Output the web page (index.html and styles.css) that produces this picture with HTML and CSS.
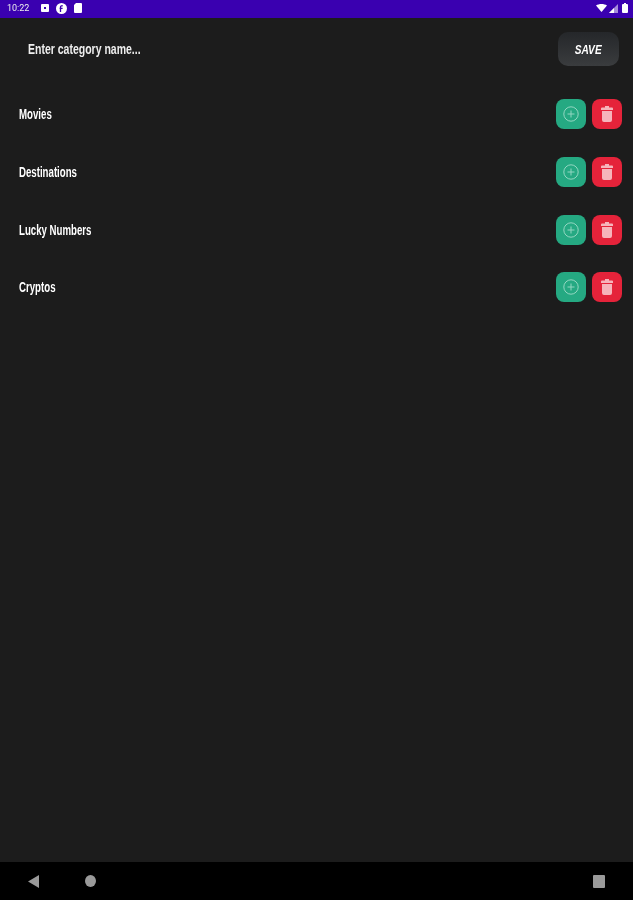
FILE: index.html
```html
<!DOCTYPE html>
<html lang="en">
<head>
  <meta charset="UTF-8">
  <title>Categories</title>
  <link rel="stylesheet" href="styles.css">
</head>
<body>
  <div class="status-bar">
    <span class="clock">10:22</span>
    <svg class="status-icon" width="8" height="8" viewBox="0 0 8 8"><rect width="8" height="8" rx="1" fill="#fff"/><rect x="3" y="3" width="2" height="2" fill="#3a00b0"/></svg>
    <svg class="status-icon" width="11" height="11" viewBox="0 0 11 11"><circle cx="5.500" cy="5.500" r="5.500" fill="#fff"/><path d="M4.500 9V4.200c0-1 .7-1.600 2.200-1.400M3.600 5.400h3" stroke="#3a00b0" stroke-width="1.300" fill="none"/></svg>
    <svg class="status-icon" width="8" height="10" viewBox="0 0 8 10"><path d="M2 0h5a1 1 0 0 1 1 1v8a1 1 0 0 1-1 1H1a1 1 0 0 1-1-1V2z" fill="#fff"/></svg>
    <div class="status-right">
      <svg width="11" height="8" viewBox="0 0 11 8"><path d="M0 1.500C3-.5 8-.5 11 1.500L5.500 8z" fill="#fff"/></svg>
      <svg width="9" height="9" viewBox="0 0 9 9"><path d="M9 0v9H0z" fill="#fff" opacity=".55"/><path d="M5 4v5H0z" fill="#fff"/></svg>
      <svg width="6" height="10" viewBox="0 0 6 10"><path d="M2 0h2v1h1a1 1 0 0 1 1 1v7a1 1 0 0 1-1 1H1a1 1 0 0 1-1-1V2a1 1 0 0 1 1-1h1z" fill="#fff"/></svg>
    </div>
  </div>

  <main class="content">
    <form class="add-form">
      <input class="name-input" type="text" placeholder="Enter category name...">
      <button class="save-btn" type="button"><span class="save-label">SAVE</span></button>
    </form>

    <ul class="category-list">
      <li class="category">
        <span class="category-name">Movies</span>
        <button class="icon-btn add" type="button"><svg width="16" height="16" viewBox="0 0 16 16"><circle cx="8" cy="8" r="7.200"/><path d="M8 4.500v7M4.500 8h7"/></svg></button>
        <button class="icon-btn del" type="button"><svg width="12" height="16" viewBox="0 0 12 16"><path d="M4 0h4v1.500h3a1 1 0 0 1 1 1V4H0V2.500a1 1 0 0 1 1-1h3zM1 5h10v9a2 2 0 0 1-2 2H3a2 2 0 0 1-2-2z"/></svg></button>
      </li>
      <li class="category">
        <span class="category-name">Destinations</span>
        <button class="icon-btn add" type="button"><svg width="16" height="16" viewBox="0 0 16 16"><circle cx="8" cy="8" r="7.200"/><path d="M8 4.500v7M4.500 8h7"/></svg></button>
        <button class="icon-btn del" type="button"><svg width="12" height="16" viewBox="0 0 12 16"><path d="M4 0h4v1.500h3a1 1 0 0 1 1 1V4H0V2.500a1 1 0 0 1 1-1h3zM1 5h10v9a2 2 0 0 1-2 2H3a2 2 0 0 1-2-2z"/></svg></button>
      </li>
      <li class="category">
        <span class="category-name">Lucky Numbers</span>
        <button class="icon-btn add" type="button"><svg width="16" height="16" viewBox="0 0 16 16"><circle cx="8" cy="8" r="7.200"/><path d="M8 4.500v7M4.500 8h7"/></svg></button>
        <button class="icon-btn del" type="button"><svg width="12" height="16" viewBox="0 0 12 16"><path d="M4 0h4v1.500h3a1 1 0 0 1 1 1V4H0V2.500a1 1 0 0 1 1-1h3zM1 5h10v9a2 2 0 0 1-2 2H3a2 2 0 0 1-2-2z"/></svg></button>
      </li>
      <li class="category">
        <span class="category-name">Cryptos</span>
        <button class="icon-btn add" type="button"><svg width="16" height="16" viewBox="0 0 16 16"><circle cx="8" cy="8" r="7.200"/><path d="M8 4.500v7M4.500 8h7"/></svg></button>
        <button class="icon-btn del" type="button"><svg width="12" height="16" viewBox="0 0 12 16"><path d="M4 0h4v1.500h3a1 1 0 0 1 1 1V4H0V2.500a1 1 0 0 1 1-1h3zM1 5h10v9a2 2 0 0 1-2 2H3a2 2 0 0 1-2-2z"/></svg></button>
      </li>
    </ul>
  </main>

  <nav class="nav-bar">
    <svg class="nav-back" width="11" height="13" viewBox="0 0 11 13"><path d="M11 0v13L0 6.500z"/></svg>
    <span class="nav-home"></span>
    <span class="nav-recent"></span>
  </nav>
</body>
</html>
```

FILE: styles.css
```css
* { box-sizing: border-box; }
html, body { height: 100%; }
body {
  margin: 0;
  display: flex;
  flex-direction: column;
  background: #1c1c1c;
  color: #fff;
  font-family: "Liberation Sans", sans-serif;
}
svg, .clock, .name-input, .save-label, .category-name, .nav-home, .nav-recent {
  filter: blur(0.45px);
}
.status-bar {
  height: 18px;
  display: flex;
  align-items: center;
  gap: 7px;
  padding: 0 5px 2px 7px;
  background: #3a00b0;
}
.clock {
  font-family: Roboto, sans-serif;
  font-size: 9px;
  color: #eee;
  width: 27px;
}
.status-right {
  margin-left: auto;
  display: flex;
  align-items: center;
  gap: 2px;
}
.status-right svg:last-child { margin-left: 2px; }
.content {
  flex: 1;
  padding: 13px 11px 0 19px;
}
.add-form {
  display: flex;
  align-items: center;
  justify-content: space-between;
  padding: 0 3px 0 9px;
  height: 36px;
}
.name-input {
  background: none;
  border: none;
  padding: 0;
  width: 300px;
  color: #fff;
  font-family: inherit;
  font-weight: bold;
  font-size: 14px;
  transform: scaleX(0.75);
  transform-origin: left center;
}
.name-input::placeholder { color: #eee; opacity: 1; }
.save-btn {
  width: 61px;
  height: 34px;
  border: none;
  border-radius: 10px;
  background: linear-gradient(#25272a, #3a3c3e);
  color: #fff;
  font-family: inherit;
  font-weight: bold;
  font-style: italic;
  font-size: 13px;
}
.save-label {
  display: inline-block;
  transform: scaleX(0.78);
}
.category-list {
  list-style: none;
  margin: 32.4px 0 0;
  padding: 0;
  display: flex;
  flex-direction: column;
  gap: 27.6px;
}
.category {
  height: 30px;
  display: flex;
  align-items: center;
  gap: 6px;
}
.category-name {
  flex: 1;
  font-weight: bold;
  font-size: 14px;
  transform: scaleX(0.69);
  transform-origin: left center;
}
.icon-btn {
  width: 30px;
  height: 30px;
  padding: 0;
  border: none;
  border-radius: 8px;
  display: flex;
  align-items: center;
  justify-content: center;
}
.icon-btn.add { background: #25a982; }
.icon-btn.add svg { fill: none; stroke: #93d6c1; stroke-width: 1; }
.icon-btn.del { background: #e5233a; }
.icon-btn.del svg { fill: #f6b4bb; }
.nav-bar {
  height: 38px;
  display: flex;
  align-items: center;
  padding: 0 28px;
  background: #000;
}
.nav-back { fill: #9a9a9a; margin-right: 46px; }
.nav-home {
  width: 11px;
  height: 12px;
  border-radius: 50%;
  background: #9a9a9a;
}
.nav-recent {
  width: 12px;
  height: 13px;
  margin-left: auto;
  border-radius: 1px;
  background: #9a9a9a;
}
```
